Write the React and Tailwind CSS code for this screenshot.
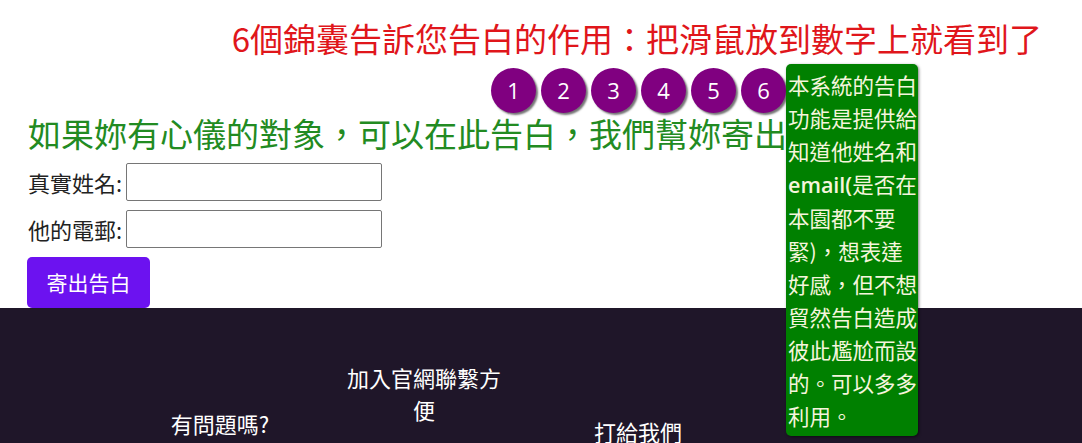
import React from "react";

const cjk = { fontFamily: '"Noto Sans CJK TC", "Noto Sans", sans-serif' };

const tipLines = [
  "本系統的告白",
  "功能是提供給",
  "知道他姓名和",
  null,
  "本園都不要",
  "緊)，想表達",
  "好感，但不想",
  "貿然告白造成",
  "彼此尷尬而設",
  "的。可以多多",
  "利用。",
];

export default function App() {
  return (
    <div className="relative w-[1082px] h-[443px] overflow-hidden bg-white" style={cjk}>
      <h1 className="mt-[18px] h-[40px] pr-[40px] text-right text-[33px] leading-[40px] font-normal text-[#e0161b] whitespace-nowrap">
        6個錦囊告訴您告白的作用：把滑鼠放到數字上就看到了
      </h1>

      <div className="mt-[10px] flex justify-end gap-[5px] pr-[296px]">
        {[1, 2, 3, 4, 5, 6].map((n) => (
          <div
            key={n}
            className="flex h-[45px] w-[45px] items-center justify-center rounded-full bg-[#800080] text-[22px] font-medium text-white shadow-[2px_2px_2px_rgba(0,0,0,0.55)]"
            style={{ fontFamily: '"Open Sans", "DejaVu Sans", sans-serif' }}
          >
            {n}
          </div>
        ))}
      </div>

      <h2 className="mt-[2px] pl-[28px] text-[33px] leading-[36px] font-normal text-[#228b22] whitespace-nowrap">
        如果妳有心儀的對象，可以在此告白，我們幫妳寄出
      </h2>

      <form className="mt-[12px] flex flex-col items-start gap-[9px] pl-[28px]">
        <label className="flex items-center gap-[4px] text-[22px] text-[#222]">
          <span>真實姓名:</span>
          <input className="h-[38px] w-[256px] rounded-[2px] border border-[#767676] bg-white" />
        </label>
        <label className="flex items-center gap-[4px] text-[22px] text-[#222]">
          <span>他的電郵:</span>
          <input className="h-[38px] w-[256px] rounded-[2px] border border-[#767676] bg-white" />
        </label>
        <button
          type="button"
          className="-ml-[1px] h-[51px] w-[123px] rounded-[5px] bg-[#6c12f0] text-[21px] text-white"
        >
          寄出告白
        </button>
      </form>

      <footer className="h-[200px] bg-[#1f1629] text-[22px] leading-[32px] text-white">
        <div className="flex pl-[120px]">
          <div className="w-[200px] pt-[99px] text-center">有問題嗎?</div>
          <div className="ml-[24px] w-[160px] pt-[53px] text-center">加入官網聯繫方便</div>
          <div className="ml-[34px] w-[200px] pt-[107px] text-center">打給我們</div>
        </div>
      </footer>

      <div className="absolute left-[786px] top-[64px] h-[372px] w-[132px] rounded-[5px] bg-[#008000] pl-[2px] pt-[4px] text-[21.5px] leading-[33px] text-[#f5f5dc] shadow-[1px_1px_3px_rgba(0,0,0,0.5)]">
        {tipLines.map((l, i) =>
          l === null ? (
            <div key={i} className="whitespace-nowrap">
              <span
                className="font-semibold"
                style={{ fontFamily: '"Open Sans", sans-serif' }}
              >
                email(
              </span>
              是否在
            </div>
          ) : (
            <div key={i} className="whitespace-nowrap">
              {l}
            </div>
          )
        )}
      </div>
    </div>
  );
}
